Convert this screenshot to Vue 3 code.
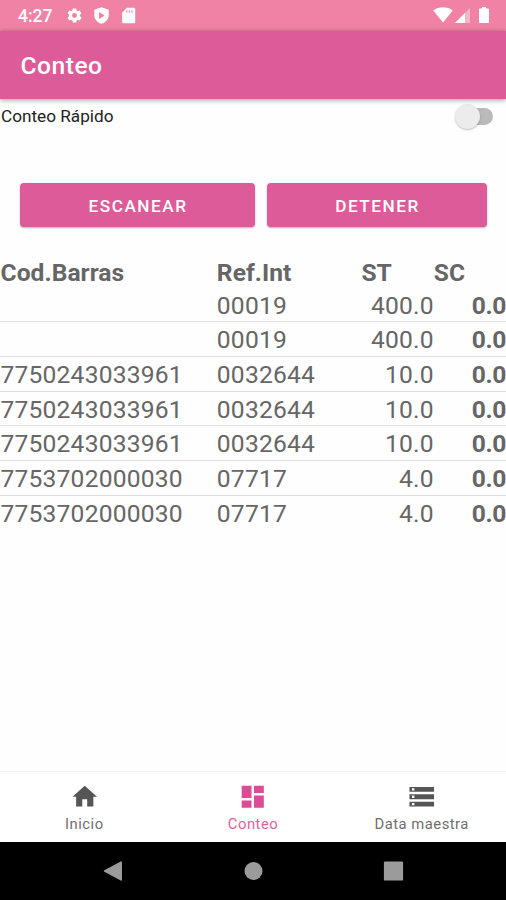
<template>
  <div class="screen">
    <header class="status">
      <span class="clock">4:27</span>
      <svg class="s-icon gear" viewBox="0 0 24 24"><path d="M19.4 13a7.5 7.5 0 0 0 0-2l2.1-1.6c.2-.2.3-.5.1-.7l-2-3.4c-.1-.3-.4-.3-.6-.3l-2.5 1a7.3 7.3 0 0 0-1.7-1L14.5 2.4c0-.2-.2-.4-.5-.4h-4c-.2 0-.5.2-.5.4l-.4 2.6a7.7 7.7 0 0 0-1.7 1l-2.5-1c-.2 0-.5 0-.6.3l-2 3.4c-.1.2-.1.5.1.7L4.6 11a7.5 7.5 0 0 0 0 2l-2.1 1.6c-.2.2-.3.5-.1.7l2 3.4c.1.3.4.3.6.3l2.5-1c.5.4 1.1.7 1.7 1l.4 2.6c0 .2.2.4.5.4h4c.2 0 .5-.2.5-.4l.4-2.6c.6-.3 1.2-.6 1.7-1l2.5 1c.2 0 .5 0 .6-.3l2-3.4c.1-.2.1-.5-.1-.7L19.4 13zM12 15.5a3.500 3.500 0 1 1 0-7 3.500 3.500 0 0 1 0 7z" /></svg>
      <svg class="s-icon shield" viewBox="0 0 24 24"><path fill-rule="evenodd" d="M12 .5 1.800 4v7.500c0 5.500 4.300 10.500 10.200 12 5.900-1.500 10.200-6.500 10.200-12V4L12 .5zM8.500 7l8 5-8 5V7z" /></svg>
      <svg class="s-icon card" viewBox="0 0 24 24"><path fill-rule="evenodd" d="M19.500 1h-10L3 8v13c0 1.100.9 2 2 2h14.500c1.100 0 2-.9 2-2V3c0-1.100-.9-2-2-2zM9 4.500h1.500V8H9V4.500zm3.500 0H14V8h-1.500V4.500zm3.500 0h1.500V8H16V4.500z" /></svg>
      <span class="grow"></span>
      <svg class="wifi" viewBox="0 0 20 16"><path d="M10 15.500.3 3.400C3 1.300 6.400.2 10 .2s7 1.100 9.700 3.200z" /></svg>
      <svg class="signal" viewBox="0 0 15 15"><path opacity=".4" d="M15 0v15H0z" /><path d="M10 5v10H0z" /></svg>
      <svg class="battery" viewBox="0 0 10 16"><path d="M3 0h4v1.600h2c.6 0 1 .4 1 1V15c0 .6-.4 1-1 1H1c-.6 0-1-.4-1-1V2.600c0-.6.4-1 1-1h2z" /></svg>
    </header>

    <div class="appbar"><h1>Conteo</h1></div>

    <main>
      <div class="quick">
        <span>Conteo Rápido</span>
        <button class="switch" :class="{ on: quick }" @click="quick = !quick"><i></i></button>
      </div>

      <div class="actions">
        <button class="btn scan">ESCANEAR</button>
        <button class="btn stop">DETENER</button>
      </div>

      <div class="row head">
        <span>Cod.Barras</span>
        <span>Ref.Int</span>
        <span>ST</span>
        <span>SC</span>
      </div>
      <div class="list">
        <div v-for="(item, i) in items" :key="i" class="row">
          <span>{{ item.code }}</span>
          <span>{{ item.ref }}</span>
          <span class="num">{{ item.st }}</span>
          <span class="num sc">{{ item.sc }}</span>
        </div>
      </div>
    </main>

    <nav class="tabs">
      <a v-for="tab in tabs" :key="tab.label" class="tab" :class="{ active: tab.label === current }" @click="current = tab.label">
        <svg viewBox="0 0 24 24"><path :d="tab.icon" /></svg>
        <span>{{ tab.label }}</span>
      </a>
    </nav>

    <footer class="sysnav">
      <svg viewBox="0 0 24 24"><path d="M21 3.200v17.600c0 .8-.6 1.200-1.300.8L3.300 12.700c-.6-.3-.6-1 0-1.400l16.400-8.900c.7-.4 1.300 0 1.300.8z" /></svg>
      <svg viewBox="0 0 24 24"><circle cx="12.500" cy="12" r="9" /></svg>
      <svg viewBox="0 0 24 24"><rect x="2.900" y="2.400" width="19.200" height="19.200" rx="1.200" /></svg>
    </footer>
  </div>
</template>

<script setup>
import { ref } from 'vue';

const quick = ref(false);
const current = ref('Conteo');

const items = ref([
  { code: '', ref: '00019', st: '400.0', sc: '0.0' },
  { code: '', ref: '00019', st: '400.0', sc: '0.0' },
  { code: '7750243033961', ref: '0032644', st: '10.0', sc: '0.0' },
  { code: '7750243033961', ref: '0032644', st: '10.0', sc: '0.0' },
  { code: '7750243033961', ref: '0032644', st: '10.0', sc: '0.0' },
  { code: '7753702000030', ref: '07717', st: '4.0', sc: '0.0' },
  { code: '7753702000030', ref: '07717', st: '4.0', sc: '0.0' },
]);

const tabs = [
  { label: 'Inicio', icon: 'M10 20v-6h4v6h5v-8h3L12 3 2 12h3v8z' },
  { label: 'Conteo', icon: 'M3 13h8V3H3v10zm0 8h8v-6H3v6zm10 0h8V11h-8v10zm0-18v6h8V3h-8z' },
  { label: 'Data maestra', icon: 'M2 20h20v-4H2v4zm2-3h2v2H4v-2zM2 4v4h20V4H2zm4 3H4V5h2v2zm-4 7h20v-4H2v4zm2-3h2v2H4v-2z' },
];
</script>

<style>
body { margin:0; background:#fff; }
</style>

<style scoped>
.screen { width:506px; height:900px; display:flex; flex-direction:column; overflow:hidden; background:#fefefe; font-family:Roboto, "Liberation Sans", sans-serif; color:#666; }
button { border:0; padding:0; font-family:inherit; cursor:pointer; }

.status { height:30.5px; flex:none; box-sizing:border-box; display:flex; align-items:center; padding:0 17px 0 18px; background:#f083a5; color:#fff; }
.status svg { fill:#fff; flex:none; }
.clock { width:47.5px; font-size:17.5px; font-weight:500; line-height:30px; padding-top:1px; }
.s-icon { width:17px; height:17px; }
.shield { margin-left:10px; }
.card { margin-left:10px; }
.grow { flex:1; }
.wifi { width:20px; height:16px; }
.signal { width:15px; height:15px; margin-left:2px; }
.battery { width:10px; height:16px; margin-left:9px; }

.appbar { height:68px; flex:none; display:flex; align-items:center; padding:1px 20.5px 0; box-sizing:border-box; background:#de5b99; box-shadow:0 1px 5px rgba(0,0,0,.4); z-index:1; }
h1 { margin:0; font-size:24.6px; font-weight:500; letter-spacing:.5px; color:#fff; }

main { flex:1; }
.quick { height:35.5px; display:flex; align-items:center; justify-content:space-between; padding:0 13px 0 1px; box-sizing:border-box; color:#222; font-size:17.2px; }
.switch { width:30px; height:17px; display:flex; align-items:center; background:#bababa; border-radius:9px; }
.switch i { flex:none; width:25px; height:25px; margin:0 -8px; border-radius:50%; background:#ececec; box-shadow:0 1px 2px rgba(0,0,0,.25); }
.switch.on { justify-content:flex-end; }

.actions { display:flex; gap:12px; padding:49px 19px 0 20px; }
.btn { height:44px; padding:1px 0 0 1px; border-radius:4px; background:#de5b99; color:#fff; font-size:17.2px; font-weight:500; letter-spacing:1.53px; box-shadow:0 1px 2px rgba(0,0,0,.3); }
.scan { width:235px; }
.stop { width:220px; }

.row { display:grid; grid-template-columns:3fr 2fr 1fr 1fr; height:34.7px; line-height:35.6px; box-sizing:border-box; font-size:24.6px; letter-spacing:.2px; white-space:nowrap; border-bottom:1.5px solid #dfdfdf; }
.row span:first-child { padding-left:.5px; }
.head { margin-top:28px; height:32.6px; line-height:35px; font-weight:700; letter-spacing:.05px; border:0; }
.list .row:last-child { border-color:transparent; }
.num { text-align:right; }
.sc { font-weight:700; letter-spacing:-.4px; }

.tabs { height:69.5px; flex:none; display:flex; border-top:1px solid #f1f1f1; background:#fff; }
.tab { flex:1; display:flex; flex-direction:column; align-items:center; padding-top:10px; color:#6e6e6e; font-size:14.8px; letter-spacing:.5px; line-height:18px; cursor:pointer; }
.tab svg { width:29.5px; height:29.5px; fill:#555; margin-bottom:3px; }
.tab.active { color:#e0629d; }
.tab.active svg { fill:#dd4b96; }

.sysnav { height:58.5px; flex:none; display:flex; justify-content:center; align-items:center; gap:116px; background:#000; }
.sysnav svg { width:24px; height:24px; fill:#9b9b9b; }
</style>
